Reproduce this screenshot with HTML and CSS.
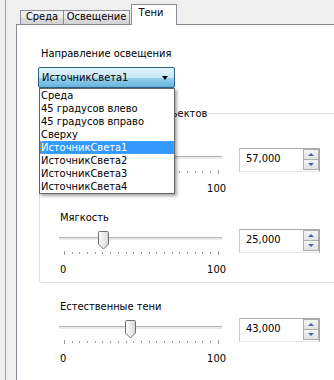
FILE: index.html
```html
<!DOCTYPE html>
<html>

<head>
  <title>Тени</title>
  <link rel="stylesheet" href="styles.css">
</head>

<body>
  <div class="app">
    <div class="splitter"></div>

    <div class="workspace">
      <div class="tab-strip">
        <div class="tab tab-first">Среда</div>
        <div class="tab tab-second">Освещение</div>
        <div class="tab tab-active">Тени</div>
      </div>

      <div class="tab-panel">
        <div class="field-label">Направление освещения</div>

        <div class="combo-wrap">
          <div class="combo">
            <span class="combo-text">ИсточникСвета1</span>
            <span class="combo-arrow"></span>
          </div>
          <!-- open drop-down list -->
          <ul class="combo-list">
            <li>Среда</li>
            <li>45 градусов влево</li>
            <li>45 градусов вправо</li>
            <li>Сверху</li>
            <li class="selected">ИсточникСвета1</li>
            <li>ИсточникСвета2</li>
            <li>ИсточникСвета3</li>
            <li>ИсточникСвета4</li>
          </ul>
        </div>

        <fieldset class="group">
          <legend>Параметры теней объектов</legend>

          <div class="slider-block">
            <div class="slider-label">Интенсивность</div>
            <div class="slider-row">
              <div class="slider">
                <div class="track-area">
                  <div class="track"></div>
                  <svg class="thumb" style="left: 87.8px" width="11" height="19" viewBox="0 0 11 19">
                    <path d="M1.5 0.5 H9.5 Q10.5 0.5 10.5 1.5 V13 L5.5 18 L0.5 13 V1.5 Q0.5 0.5 1.5 0.5 Z" class="thumb-shape"/>
                  </svg>
                </div>
                <div class="ticks">
                  <i class="end"></i><i></i><i></i><i></i><i></i><i></i><i></i><i></i><i></i><i></i><i></i><i></i><i></i><i></i><i></i><i></i><i></i><i></i><i></i><i></i><i class="end"></i>
                </div>
                <div class="scale"><span>0</span><span>100</span></div>
              </div>
              <div class="spin">
                <div class="spin-value">57,000</div>
                <div class="spin-buttons">
                  <div class="spin-btn"><span class="arrow-up"></span></div>
                  <div class="spin-btn"><span class="arrow-down"></span></div>
                </div>
              </div>
            </div>
          </div>

          <div class="slider-block">
            <div class="slider-label">Мягкость</div>
            <div class="slider-row">
              <div class="slider">
                <div class="track-area">
                  <div class="track"></div>
                  <svg class="thumb" style="left: 38.5px" width="11" height="19" viewBox="0 0 11 19">
                    <path d="M1.5 0.5 H9.5 Q10.5 0.5 10.5 1.5 V13 L5.5 18 L0.5 13 V1.5 Q0.5 0.5 1.5 0.5 Z" class="thumb-shape"/>
                  </svg>
                </div>
                <div class="ticks">
                  <i class="end"></i><i></i><i></i><i></i><i></i><i></i><i></i><i></i><i></i><i></i><i></i><i></i><i></i><i></i><i></i><i></i><i></i><i></i><i></i><i></i><i class="end"></i>
                </div>
                <div class="scale"><span>0</span><span>100</span></div>
              </div>
              <div class="spin">
                <div class="spin-value">25,000</div>
                <div class="spin-buttons">
                  <div class="spin-btn"><span class="arrow-up"></span></div>
                  <div class="spin-btn"><span class="arrow-down"></span></div>
                </div>
              </div>
            </div>
          </div>
        </fieldset>

        <div class="slider-block outside">
          <div class="slider-label">Естественные тени</div>
          <div class="slider-row">
            <div class="slider">
              <div class="track-area">
                <div class="track"></div>
                <svg class="thumb" style="left: 66.2px" width="11" height="19" viewBox="0 0 11 19">
                  <path d="M1.5 0.5 H9.5 Q10.5 0.5 10.5 1.5 V13 L5.5 18 L0.5 13 V1.5 Q0.5 0.5 1.5 0.5 Z" class="thumb-shape"/>
                </svg>
              </div>
              <div class="ticks">
                <i class="end"></i><i></i><i></i><i></i><i></i><i></i><i></i><i></i><i></i><i></i><i></i><i></i><i></i><i></i><i></i><i></i><i></i><i></i><i></i><i></i><i class="end"></i>
              </div>
              <div class="scale"><span>0</span><span>100</span></div>
            </div>
            <div class="spin">
              <div class="spin-value">43,000</div>
              <div class="spin-buttons">
                <div class="spin-btn"><span class="arrow-up"></span></div>
                <div class="spin-btn"><span class="arrow-down"></span></div>
              </div>
            </div>
          </div>
        </div>
      </div>
    </div>
  </div>

  <svg width="0" height="0" class="defs">
    <defs>
      <linearGradient id="thumbFill" x1="0" y1="0" x2="1" y2="0">
        <stop offset="0" stop-color="#fdfdfd" />
        <stop offset="0.5" stop-color="#ececec" />
        <stop offset="1" stop-color="#d6d6d6" />
      </linearGradient>
    </defs>
  </svg>
</body>

</html>
```

FILE: styles.css
```css
html,
body {
  margin: 0;
  padding: 0;
  height: 100%;
  overflow: hidden;
}

body {
  background-color: #f0f0f0;
  font-family: "DejaVu Sans Condensed", "DejaVu Sans", sans-serif;
  font-stretch: condensed;
  font-size: 11px;
  line-height: 13px;
  color: #000;
}

.defs {
  position: absolute;
}

.app {
  display: flex;
  height: 100%;
}

.splitter {
  width: 5px;
  flex-shrink: 0;
  border-right: 1px solid #a0a0a0;
}

.workspace {
  padding-left: 10px;
  padding-top: 4px;
  flex-shrink: 0;
}

/* Tabs */
.tab-strip {
  display: flex;
  align-items: flex-end;
  padding-left: 4px;
  height: 20px;
}

.tab {
  height: 14px;
  box-sizing: border-box;
  border: 1px solid #898c95;
  border-bottom: none;
  background: linear-gradient(#f3f3f3, #ebebeb 50%, #dddddd 51%, #d3d3d3);
  text-align: center;
  white-space: nowrap;
  line-height: 12px;
}

.tab-first {
  width: 44px;
}

.tab-second {
  width: 67px;
  margin-left: -1px;
}

.tab-active {
  width: 46px;
  height: 21px;
  margin-left: 1px;
  margin-bottom: -1px;
  background: #fff;
  padding-top: 2px;
  padding-right: 6px;
  position: relative;
  z-index: 1;
}

.tab-panel {
  width: 340px;
  height: 400px;
  box-sizing: border-box;
  border: 1px solid #898c95;
  background-color: #fff;
  padding: 22px 0 0 21px;
}

/* Combo box */
.field-label {
  padding-left: 3px;
}

.combo-wrap {
  position: relative;
  margin-top: 7px;
  width: 137px;
}

.combo {
  height: 21px;
  box-sizing: border-box;
  border: 1px solid #2c628b;
  border-radius: 2px;
  background: linear-gradient(#e5f4fc, #c4e5f6 50%, #98d1ef 51%, #68b3db);
  display: flex;
  align-items: center;
  padding-left: 3px;
  padding-right: 6px;
  justify-content: space-between;
}

.combo-arrow {
  width: 0;
  height: 0;
  border-left: 3.5px solid transparent;
  border-right: 3.5px solid transparent;
  border-top: 4px solid #000;
}

.combo-list {
  position: absolute;
  top: 21px;
  left: 1px;
  width: 136px;
  box-sizing: border-box;
  margin: 0;
  padding: 0;
  list-style: none;
  background-color: #fff;
  border: 1px solid #646464;
  box-shadow: 2px 2px 3px rgba(0, 0, 0, 0.35);
  z-index: 10;
}

.combo-list li {
  height: 13px;
  line-height: 13px;
  padding-left: 1px;
  white-space: nowrap;
  box-sizing: border-box;
}

.combo-list .selected {
  background-color: #3399ff;
  color: #fff;
  border: 1px dotted #d58a3a;
  line-height: 11px;
  padding-left: 0;
}

/* Group box */
.group {
  margin: 19px 0 0 1px;
  padding: 10px 0 6px 20px;
  border: 1px solid #d5dfe5;
  border-radius: 3px;
  min-width: 0;
}

.group legend {
  padding: 0 2px;
  line-height: 13px;
}

.slider-block + .slider-block {
  margin-top: 16px;
}

.slider-block.outside {
  margin-top: 17px;
  margin-left: 22px;
}

.slider-row {
  display: flex;
  margin-top: 3px;
  margin-left: -1px;
}

.slider {
  width: 163px;
}

.track-area {
  position: relative;
  height: 24px;
}

.track {
  position: absolute;
  top: 10px;
  left: 0;
  right: 0;
  height: 1px;
  border-bottom: 2px solid #e7eaea;
  background-color: #b5b5b5;
}

.thumb {
  position: absolute;
  top: 4px;
  display: block;
}

.thumb-shape {
  fill: url(#thumbFill);
  stroke: #707070;
  stroke-width: 1;
}

.ticks {
  display: flex;
  justify-content: space-between;
  align-items: flex-start;
  margin-left: 5px;
  width: 155px;
  height: 4px;
}

.ticks i {
  width: 1px;
  height: 2px;
  margin-top: 1px;
  background-color: #9a9a9a;
}

.ticks i.end {
  height: 4px;
  margin-top: 0;
}

.scale {
  display: flex;
  justify-content: space-between;
  margin-top: 8px;
  margin-left: 1px;
  width: 166px;
}

/* Spin box */
.spin {
  display: flex;
  margin-top: 2px;
  margin-left: 17px;
  width: 81px;
  height: 24px;
  box-sizing: border-box;
  border: 1px solid;
  border-color: #abadb3 #a6a6a6 #e3e9ef #c8c9cd;
  background-color: #fff;
}

.spin-value {
  flex-grow: 1;
  padding-left: 6px;
  line-height: 20px;
}

.spin-buttons {
  width: 16px;
  display: flex;
  flex-direction: column;
  padding-bottom: 1px;
}

.spin-btn {
  flex: 1;
  border: 1px solid #acacac;
  background: linear-gradient(#f4f4f4, #e2e2e2);
  display: flex;
  align-items: center;
  justify-content: center;
}

.spin-btn + .spin-btn {
  border-top: none;
}

.arrow-up,
.arrow-down {
  width: 0;
  height: 0;
  border-left: 3px solid transparent;
  border-right: 3px solid transparent;
}

.arrow-up {
  border-bottom: 3px solid #4c63a8;
}

.arrow-down {
  border-top: 3px solid #4c63a8;
}
```
